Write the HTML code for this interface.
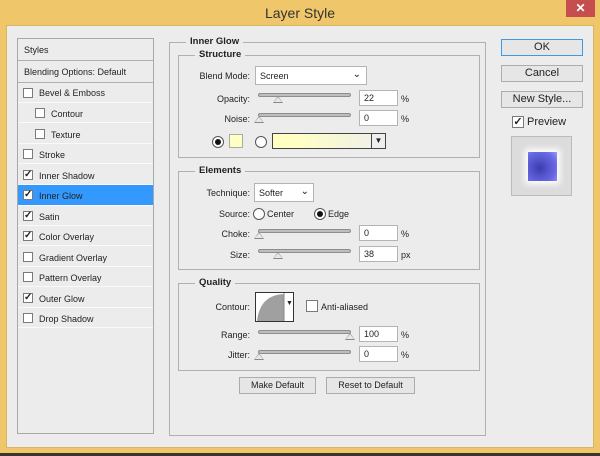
<!DOCTYPE html><html><head><style>
*{margin:0;padding:0;box-sizing:border-box}
body{width:600px;height:456px;background:#3a3530;position:relative;overflow:hidden;font-family:"Liberation Sans",sans-serif;font-size:9px;color:#222}
.a{position:absolute}
#win{left:0;top:0;width:600px;height:453px;background:#efc66a}
#body{left:6px;top:25px;width:588px;height:423px;background:#ececec;border:1px solid #d8b560}
.t{position:absolute;white-space:nowrap}
.row{position:absolute;left:0;width:135px;height:20px;border-bottom:1px solid #fafafa}
.cb{position:absolute;width:10px;height:10px;background:#fff;border:1px solid #7a7a7a;font-size:10px;line-height:8px;text-align:center;font-weight:bold}
.grp{position:absolute;border:1px solid #b0b0b0}
.lg{position:absolute;background:#ececec;padding:0 4px;font-weight:bold;font-size:9.5px;top:-7px}
.inp{position:absolute;background:#fff;border:1px solid #b4b4b4;height:16px;padding:2px 4px;font-size:9px}
.sl{position:absolute;height:4px;border-radius:2px;background:#bdbdbd;border:1px solid #8e8e8e}
.th{position:absolute;width:0;height:0;border-left:5px solid transparent;border-right:5px solid transparent;border-bottom:7px solid #888}
.th:after{content:"";position:absolute;left:-4px;top:1px;border-left:4px solid transparent;border-right:4px solid transparent;border-bottom:5px solid #e8e8e8}
.btn{position:absolute;background:#e6e6e6;border:1px solid #acacac;text-align:center;font-size:10px;line-height:15px}
.rb{position:absolute;width:12px;height:12px;border-radius:50%;background:#fff;border:1px solid #555}
.rb.on:after{content:"";position:absolute;left:2px;top:2px;width:6px;height:6px;border-radius:50%;background:#111}
.lb{position:absolute;text-align:right;width:80px}
</style></head><body>
<div id="win" class="a"></div>
<div class="t" style="left:0;width:600px;text-align:center;top:5px;font-size:14px;color:#333">Layer Style</div>
<div class="a" style="left:566px;top:0;width:29px;height:17px;background:#c74e4e;color:#fff;text-align:center;font-size:12px;line-height:16px;font-weight:bold">✕</div>
<div id="body" class="a"></div>

<!-- left panel -->
<div class="a" style="left:17px;top:38px;width:137px;height:396px;border:1px solid #a8a8a8;background:#ececec">
<div class="row" style="top:0;height:22px;border-bottom:1px solid #b0b0b0"><span class="t" style="left:6px;top:6px">Styles</span></div>
<div class="row" style="top:23px;height:21px;border-bottom:1px solid #b0b0b0"><span class="t" style="left:6px;top:5px">Blending Options: Default</span></div>
<div class="row" style="top:44px"><div class="cb" style="left:5px;top:5px"></div><span class="t" style="left:21px;top:5px">Bevel &amp; Emboss</span></div>
<div class="row" style="top:64px"><div class="cb" style="left:17px;top:5px"></div><span class="t" style="left:33px;top:6px">Contour</span></div>
<div class="row" style="top:85px"><div class="cb" style="left:17px;top:5px"></div><span class="t" style="left:33px;top:6px">Texture</span></div>
<div class="row" style="top:105px"><div class="cb" style="left:5px;top:5px"></div><span class="t" style="left:21px;top:6px">Stroke</span></div>
<div class="row" style="top:126px"><div class="cb" style="left:5px;top:5px">✓</div><span class="t" style="left:21px;top:6px">Inner Shadow</span></div>
<div class="row" style="top:146px;background:#3399ff;height:21px"><div class="cb" style="left:5px;top:5px">✓</div><span class="t" style="left:21px;top:6px">Inner Glow</span></div>
<div class="row" style="top:167px"><div class="cb" style="left:5px;top:5px">✓</div><span class="t" style="left:21px;top:6px">Satin</span></div>
<div class="row" style="top:187px"><div class="cb" style="left:5px;top:5px">✓</div><span class="t" style="left:21px;top:6px">Color Overlay</span></div>
<div class="row" style="top:208px"><div class="cb" style="left:5px;top:5px"></div><span class="t" style="left:21px;top:6px">Gradient Overlay</span></div>
<div class="row" style="top:228px"><div class="cb" style="left:5px;top:5px"></div><span class="t" style="left:21px;top:6px">Pattern Overlay</span></div>
<div class="row" style="top:249px"><div class="cb" style="left:5px;top:5px">✓</div><span class="t" style="left:21px;top:6px">Outer Glow</span></div>
<div class="row" style="top:269px"><div class="cb" style="left:5px;top:5px"></div><span class="t" style="left:21px;top:6px">Drop Shadow</span></div>
</div>

<!-- Inner Glow group -->
<div class="grp" style="left:169px;top:42px;width:317px;height:394px"><span class="lg" style="left:16px">Inner Glow</span></div>
<div class="grp" style="left:178px;top:55px;width:302px;height:103px"><span class="lg" style="left:16px">Structure</span></div>
<div class="lb" style="left:170px;top:71px">Blend Mode:</div>
<div class="inp" style="left:255px;top:66px;width:112px;height:19px;padding-top:4px">Screen<span class="t" style="right:5px;top:2px;font-size:10px">⌄</span></div>
<div class="lb" style="left:170px;top:94px">Opacity:</div>
<div class="sl" style="left:258px;top:93px;width:93px"></div><div class="th" style="left:273px;top:96px"></div>
<div class="inp" style="left:359px;top:90px;width:39px">22</div><span class="t" style="left:401px;top:94px">%</span>
<div class="lb" style="left:170px;top:114px">Noise:</div>
<div class="sl" style="left:258px;top:113px;width:93px"></div><div class="th" style="left:254px;top:116px"></div>
<div class="inp" style="left:359px;top:110px;width:39px">0</div><span class="t" style="left:401px;top:114px">%</span>
<div class="rb on" style="left:212px;top:136px"></div>
<div class="a" style="left:229px;top:134px;width:14px;height:14px;background:#ffffc4;border:1px solid #aaa"></div>
<div class="rb" style="left:255px;top:136px"></div>
<div class="a" style="left:272px;top:133px;width:114px;height:16px;border:1px solid #444;background:linear-gradient(90deg,#ffffc4 20%,#eee 100%)"><div class="a" style="right:0;top:0;width:14px;height:14px;background:#eee;border-left:1px solid #444;font-size:8px;text-align:center;line-height:14px">▼</div></div>

<div class="grp" style="left:178px;top:171px;width:302px;height:99px"><span class="lg" style="left:16px">Elements</span></div>
<div class="lb" style="left:170px;top:188px">Technique:</div>
<div class="inp" style="left:254px;top:183px;width:60px;height:19px;padding-top:4px">Softer<span class="t" style="right:4px;top:2px;font-size:10px">⌄</span></div>
<div class="lb" style="left:170px;top:209px">Source:</div>
<div class="rb" style="left:253px;top:208px"></div><span class="t" style="left:267px;top:209px">Center</span>
<div class="rb on" style="left:314px;top:208px"></div><span class="t" style="left:328px;top:209px">Edge</span>
<div class="lb" style="left:170px;top:229px">Choke:</div>
<div class="sl" style="left:258px;top:229px;width:93px"></div><div class="th" style="left:254px;top:232px"></div>
<div class="inp" style="left:359px;top:225px;width:39px">0</div><span class="t" style="left:401px;top:229px">%</span>
<div class="lb" style="left:170px;top:250px">Size:</div>
<div class="sl" style="left:258px;top:249px;width:93px"></div><div class="th" style="left:273px;top:252px"></div>
<div class="inp" style="left:359px;top:246px;width:39px">38</div><span class="t" style="left:401px;top:250px">px</span>

<div class="grp" style="left:178px;top:283px;width:302px;height:88px"><span class="lg" style="left:16px">Quality</span></div>
<div class="lb" style="left:170px;top:302px">Contour:</div>
<div class="a" style="left:255px;top:292px;width:39px;height:30px;border:1px solid #333;background:#fff;overflow:hidden">
<svg width="37" height="28" class="a" style="left:0;top:0"><path d="M1 28 Q4 2 28 1 L28 28 Z" fill="#a0a0a0"/><line x1="28" y1="0" x2="28" y2="28" stroke="#888"/></svg>
<span class="t" style="left:30px;top:7px;font-size:7px">▼</span></div>
<div class="cb" style="left:306px;top:300px;width:12px;height:12px"></div><span class="t" style="left:321px;top:302px">Anti-aliased</span>
<div class="lb" style="left:170px;top:330px">Range:</div>
<div class="sl" style="left:258px;top:330px;width:93px"></div><div class="th" style="left:345px;top:333px"></div>
<div class="inp" style="left:359px;top:326px;width:39px">100</div><span class="t" style="left:401px;top:330px">%</span>
<div class="lb" style="left:170px;top:350px">Jitter:</div>
<div class="sl" style="left:258px;top:350px;width:93px"></div><div class="th" style="left:254px;top:353px"></div>
<div class="inp" style="left:359px;top:346px;width:39px">0</div><span class="t" style="left:401px;top:350px">%</span>

<div class="btn" style="left:239px;top:377px;width:77px;height:17px;font-size:9px">Make Default</div>
<div class="btn" style="left:326px;top:377px;width:89px;height:17px;font-size:9px">Reset to Default</div>

<!-- right -->
<div class="btn" style="left:501px;top:39px;width:82px;height:17px;border-color:#3c9ae6;font-size:11px">OK</div>
<div class="btn" style="left:501px;top:65px;width:82px;height:17px;font-size:11px">Cancel</div>
<div class="btn" style="left:501px;top:91px;width:82px;height:17px;font-size:11px">New Style...</div>
<div class="cb" style="left:512px;top:116px;width:12px;height:12px;font-size:11px;line-height:10px">✓</div><span class="t" style="left:527px;top:116px;font-size:11px">Preview</span>
<div class="a" style="left:511px;top:136px;width:61px;height:60px;border:1px solid #bbb;background:#dcdcdc">
<div class="a" style="left:16px;top:15px;width:29px;height:29px;background:radial-gradient(circle at 40% 55%,#3c3cb0,#6a6ae6 70%,#9a9af0);box-shadow:0 0 6px 3px #fff"></div></div>
</body></html>
